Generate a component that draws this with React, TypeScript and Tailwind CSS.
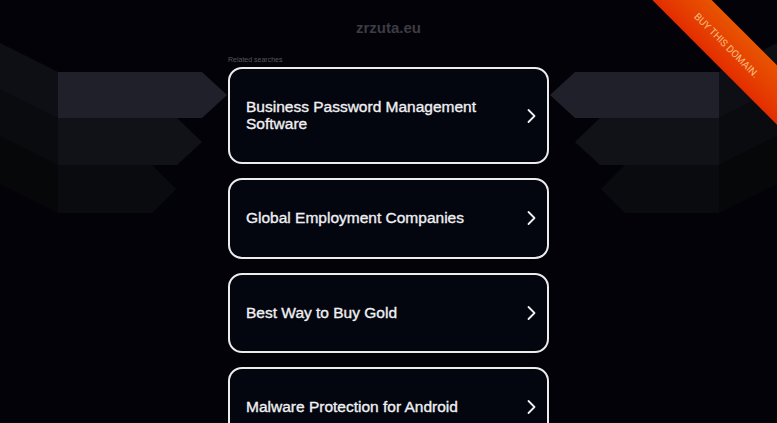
import React from 'react';

const searches = [
  'Business Password Management Software',
  'Global Employment Companies',
  'Best Way to Buy Gold',
  'Malware Protection for Android',
];

const Arrows = ({ className }: { className: string }) => (
  <svg className={className} width="230" height="215" viewBox="0 0 230 215">
    <polygon points="0,136 58,165 58,213 0,184" fill="#060709" />
    <polygon points="58,165 152,165 176,189 152,213 58,213" fill="#0a0b0e" />
    <polygon points="0,89 58,118 58,165 0,136" fill="#0a0b0f" />
    <polygon points="58,118 177,118 202,142 177,165 58,165" fill="#111218" />
    <polygon points="0,43 58,72 58,118 0,89" fill="#0e0f15" />
    <polygon points="58,72 202,72 227,95 202,118 58,118" fill="#1f2029" />
  </svg>
);

const SearchCard = ({ label }: { label: string }) => (
  <a
    href="#"
    className="flex items-center justify-between rounded-[14px] border-2 border-[#ececec] bg-[#03060f] py-[30px] pl-4 pr-[11px]"
  >
    <span className="max-w-[260px] text-[15.5px] leading-[16.5px] text-[#f0f0f2] [-webkit-text-stroke:0.35px_#f0f0f2]">
      {label}
    </span>
    <svg width="10" height="16" viewBox="0 0 10 16" className="shrink-0">
      <path d="M2.5 2l6 6-6 6" fill="none" stroke="#f0f0f2" strokeWidth="1.8" strokeLinecap="round" strokeLinejoin="round" />
    </svg>
  </a>
);

export default function App() {
  return (
    <div className="relative min-h-screen overflow-hidden bg-[#020208] font-['Liberation_Sans',Arial,sans-serif]">
      <Arrows className="absolute left-0 top-0" />
      <Arrows className="absolute right-0 top-0 -scale-x-100" />

      <div className="relative mx-auto flex w-[321px] flex-col pt-[18px]">
        <h1 className="text-center text-[15px] font-bold leading-[20px] text-[#3c3c44]">zrzuta.eu</h1>
        <p className="mt-[17px] text-[7px] leading-[10px] text-[#55565e]">Related searches</p>
        <div className="mt-[2px] flex flex-col gap-[14px]">
          {searches.map((s) => (
            <SearchCard key={s} label={s} />
          ))}
        </div>
      </div>

      <div className="absolute right-0 top-0 h-[160px] w-[160px] overflow-hidden">
        <div className="absolute left-[-20px] top-[24px] flex h-[42px] w-[260px] rotate-45 items-center justify-center bg-gradient-to-b from-[#e85400] to-[#e32c00]">
          <span className="font-['Roboto',sans-serif] text-[10px] uppercase text-[#f8bf82]">Buy this domain.</span>
        </div>
      </div>
    </div>
  );
}
